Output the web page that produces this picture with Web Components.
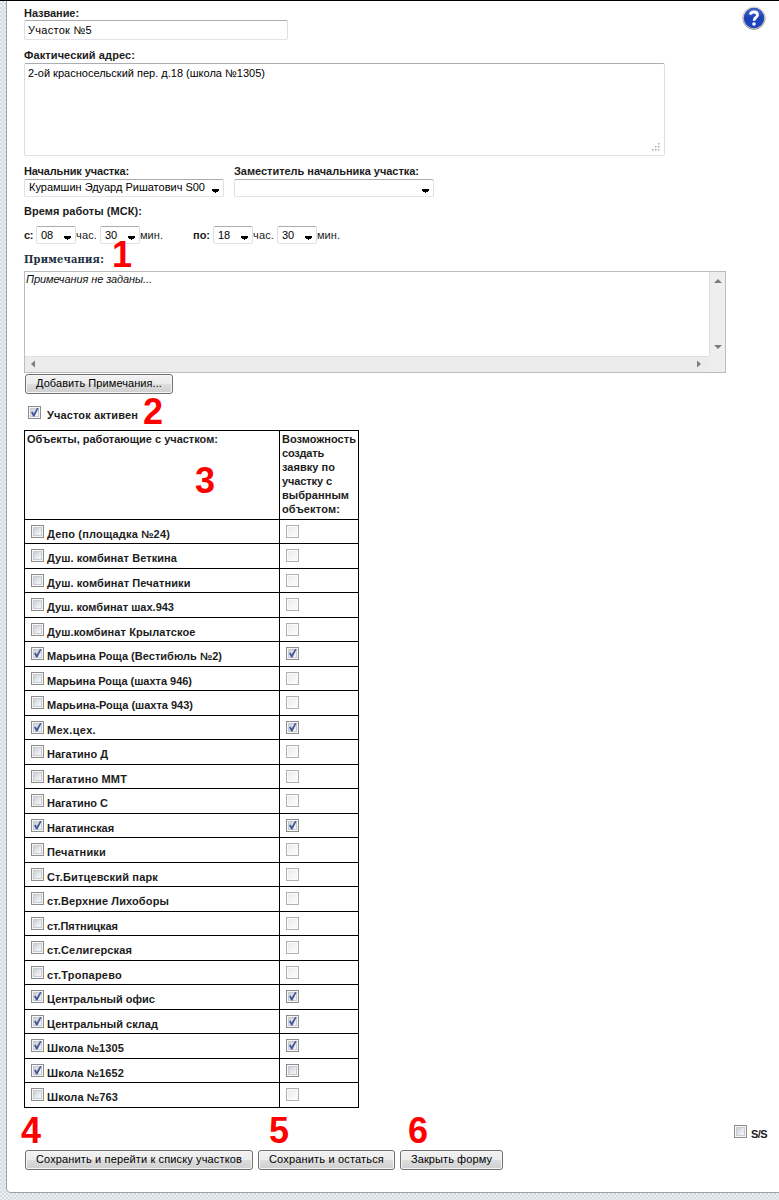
<!DOCTYPE html>
<html lang="ru">
<head>
<meta charset="utf-8">
<title>Участок №5</title>
<style>
html,body{margin:0;height:1200px;overflow:hidden;background:#fff}
body{font:11px/14px "Liberation Sans",Arial,sans-serif;color:#1c1c1c}
</style>
</head>
<body>
<site-page></site-page>
<script>
const define = (name, html, setup) => {
  const t = document.createElement('template');
  t.innerHTML = html;
  customElements.define(name, class extends HTMLElement {
    connectedCallback() {
      if (this.shadowRoot) return;
      this.attachShadow({mode: 'open'}).appendChild(t.content.cloneNode(true));
      if (setup) setup(this, this.shadowRoot);
    }
  });
};

/* Text run; "w" tracks it out or in to the given width. */
define('fit-text', `<style>
:host{display:block;white-space:nowrap;line-height:14px;height:14px}
:host([b]){font-weight:bold}
span{display:inline-block}
</style><span></span>`, (el, r) => {
  const s = r.querySelector('span');
  s.textContent = el.getAttribute('t');
  const w = parseFloat(el.getAttribute('w'));
  if (w) s.style.letterSpacing = ((w - s.getBoundingClientRect().width) / s.textContent.length).toFixed(3) + 'px';
});

define('check-box', `<style>
:host{display:block;flex:none;width:13px;height:13px}
svg{display:block}
.tick{display:none}
:host([on]) .tick{display:block}
.off{display:none}
:host([disabled]) .on{display:none}
:host([disabled]) .off{display:block}
</style><svg width="13" height="13" viewBox="0 0 13 13">
<defs>
<linearGradient id="g" x1="0" y1="0" x2="1" y2="1"><stop offset="0" stop-color="#c6cad2"/><stop offset=".55" stop-color="#e6e8eb"/><stop offset="1" stop-color="#f8f8f8"/></linearGradient>
<linearGradient id="h" x1="0" y1="0" x2="1" y2="1"><stop offset="0" stop-color="#ededee"/><stop offset="1" stop-color="#fbfbfb"/></linearGradient>
</defs>
<g class="on"><rect x=".5" y=".5" width="12" height="12" fill="#f6f6f6" stroke="#8c8d8d"/><rect x="2.5" y="2.5" width="8" height="8" fill="url(#g)" stroke="#c9ccd1"/></g>
<g class="off"><rect x=".5" y=".5" width="12" height="12" fill="#fbfbfb" stroke="#b1b1b1"/><rect x="2" y="2" width="9" height="9" fill="url(#h)"/></g>
<path class="tick" d="M3 6.2 4.7 5.5 5.7 7.4 9 2 10.6 2.3 6.4 10.4 5.1 10.4Z" fill="#43599c"/>
</svg>`);

define('text-field', `<style>
:host{display:flex;box-sizing:border-box;background:#fff;border:1px solid #e2e3ea;border-top-color:#abadb3;border-left-color:#dbdfe6;border-right-color:#dbdfe6;border-radius:2px;padding:2px 0 0 3px;color:#000}
.grip{display:none;margin:auto 4px 3px auto}
:host([area]) .grip{display:block}
</style><slot></slot><svg class="grip" width="9" height="9" fill="#aaa"><path d="M7 0h1.5v1.5H7zM7 3h1.5v1.5H7zM4 3h1.5v1.5H4zM7 6h1.5v1.5H7zM4 6h1.5v1.5H4zM1 6h1.5v1.5H1z"/></svg>`);

define('drop-list', `<style>
:host{display:flex;flex:none;box-sizing:border-box;height:18px;background:#fff;border:1px solid #e2e3ea;border-top-color:#abadb3;border-left-color:#dbdfe6;border-right-color:#dbdfe6;border-radius:2px;padding-left:4px;color:#000}
svg{margin:9px 4px 0 auto}
</style><slot></slot><svg width="7" height="4" shape-rendering="crispEdges"><path d="M0 0h7v1H0zM0 1h7v1H0zM1 2h5v1H1zM3 3h1v1H3z"/></svg>`);

define('push-button', `<style>
:host{display:flex;flex:none;box-sizing:border-box;height:20px;border:1px solid #707070;border-radius:3px;padding:1px 0 0 10px;color:#000;
background:linear-gradient(#f2f2f2 0,#ebebeb 50%,#dddddd 50%,#cfcfcf 100%);box-shadow:inset 0 0 0 1px #f6f6f6}
</style><slot></slot>`);

define('help-icon', `<style>:host{display:block;width:24px;height:24px}svg{display:block}</style>
<svg width="24" height="24" viewBox="0 0 24 24"><defs>
<linearGradient id="r" x1="0" y1="0" x2="0" y2="1"><stop offset="0" stop-color="#e0e0e0"/><stop offset="1" stop-color="#777"/></linearGradient>
<linearGradient id="b" x1="0" y1="0" x2="0" y2="1"><stop offset="0" stop-color="#4a6fd4"/><stop offset=".5" stop-color="#1c3fb6"/><stop offset="1" stop-color="#1d48c8"/></linearGradient></defs>
<circle cx="12" cy="12" r="11.3" fill="#e9e9e4" stroke="url(#r)" stroke-width=".9"/>
<circle cx="12" cy="12" r="9.9" fill="url(#b)" stroke="#18309a" stroke-width=".7"/>
<path d="M8.4 8.6C8.9 5.2 15.5 5 15.5 8.9 15.5 11.4 12.1 11.5 12 14.7" fill="none" stroke="#fff" stroke-width="2.8"/>
<circle cx="12" cy="18" r="1.8" fill="#fff"/></svg>`);

define('scroll-box', `<style>
:host{display:grid;box-sizing:border-box;width:702px;height:102px;border:1px solid #bcbcbc;grid-template:1fr 16px/1fr 16px;background:#fff;color:#111}
.c{padding-left:1px;font-style:italic}
.v{background:#eee;border-left:1px solid #e0e0e0;display:flex;flex-direction:column;justify-content:space-between;align-items:center;padding:7px 0 7px}
.h{background:#ececec;border-top:1px solid #e0e0e0;display:flex;justify-content:space-between;align-items:flex-start;padding:3px 7px 0 5px}
.k{background:#eee}
svg{display:block}
</style><div class="c"><slot></slot></div>
<div class="v"><svg width="8" height="4"><path d="M0 4 4 0 8 4Z" fill="#7c7c7c"/></svg><svg width="8" height="4"><path d="M0 0 4 4 8 0Z" fill="#7c7c7c"/></svg></div>
<div class="h"><svg width="5" height="8"><path d="M5 0.5 1 4 5 7.5Z" fill="#7c7c7c"/></svg><svg width="5" height="8"><path d="M0 0.5 4 4 0 7.5Z" fill="#7c7c7c"/></svg></div><div class="k"></div>`);

/* Numbered callout laid over the form. */
define('call-out', `<style>
:host{position:absolute;font:bold 36px/36px "Liberation Sans",Arial,sans-serif;color:#f00}
</style><slot></slot>`);

define('object-row', `<style>
:host{display:grid;grid-template-columns:254px 78px;column-gap:1px;background:#000;box-sizing:border-box;border-bottom:1px solid #000}
div{background:#fff;display:flex;padding:5px 0 0 6px}
fit-text{margin:2px 0 0 3px}
</style><div><check-box id="a"></check-box><fit-text b></fit-text></div><div><check-box id="c"></check-box></div>`, (el, r) => {
  const [name, w, a, c] = el.data;
  const t = r.querySelector('fit-text'), n = document.createElement('fit-text');
  n.setAttribute('b', ''); n.setAttribute('t', name); n.setAttribute('w', w);
  t.replaceWith(n);
  if (a) r.getElementById('a').setAttribute('on', '');
  if (c === 1) r.getElementById('c').setAttribute('on', '');
  if (c === 0) r.getElementById('c').setAttribute('disabled', '');
});

/* name, text width, linked, may create requests (0 disabled, 1 checked, 2 enabled) */
const OBJECTS = [
['Депо (площадка №24)',123,0,0],['Душ. комбинат Веткина',130,0,0],['Душ. комбинат Печатники',143.5,0,0],
['Душ. комбинат шах.943',127,0,0],['Душ.комбинат Крылатское',148.5,0,0],['Марьина Роща (Вестибюль №2)',175,1,1],
['Марьина Роща (шахта 946)',145,0,0],['Марьина-Роща (шахта 943)',146,0,0],['Мех.цех.',49,1,1],['Нагатино Д',61,0,0],
['Нагатино ММТ',80,0,0],['Нагатино С',61,0,0],['Нагатинская',67,1,1],['Печатники',59,0,0],['Ст.Битцевский парк',111,0,0],
['ст.Верхние Лихоборы',122,0,0],['ст.Пятницкая',71,0,0],['ст.Селигерская',85,0,0],['ст.Тропарево',75,0,0],
['Центральный офис',108,1,1],['Центральный склад',111,1,1],['Школа №1305',77,1,1],['Школа №1652',77,1,2],['Школа №763',71,0,0]];

define('object-table', `<style>
:host{display:block;box-sizing:border-box;width:335px;border:1px solid #000;border-bottom:0}
.head{display:grid;grid-template-columns:254px 78px;column-gap:1px;background:#000;height:88px;border-bottom:1px solid #000}
.head div{background:#fff;padding:1px 0 0 2px}
object-row{height:25px}
object-row:nth-child(odd){height:24px}
</style><div class="head"><div><fit-text b t="Объекты, работающие с участком:" w="191"></fit-text></div>
<div><fit-text b t="Возможность" w="74"></fit-text><fit-text b t="создать" w="42"></fit-text><fit-text b t="заявку по" w="53"></fit-text><fit-text b t="участку с" w="50"></fit-text><fit-text b t="выбранным" w="67"></fit-text><fit-text b t="объектом:" w="58"></fit-text></div></div>`, (el, r) => {
  for (const o of OBJECTS) { const e = document.createElement('object-row'); e.data = o; r.appendChild(e); }
});

define('site-page', `<style>
:host{display:block;position:relative;box-sizing:border-box;width:779px;height:1200px;border-top:1px solid #000;padding-left:6px;overflow:hidden;
background:#e4ebef conic-gradient(#d3dce2 25%,#eaf0f3 0 50%,#d3dce2 0 75%,#eaf0f3 0) 0 0/4px 4px}
main{display:block;box-sizing:border-box;width:790px;height:1192px;background:#fff;border:1px solid #a0a0a0;border-top:0;border-radius:0 0 0 5px;padding:5px 0 0 17px}
.top{display:flex;height:42px}
.top help-icon{margin-left:454px}
.row{display:flex}
.people{gap:10px;margin-top:8px;height:40px}
.people drop-list{width:200px;margin-top:1px}
.time{margin-top:8px;height:18px}
.time drop-list{width:40px}
.time fit-text{margin-top:2px}
.time drop-list fit-text{margin-top:1px}
.notes{margin-top:9px;font:bold 11px/14px "DejaVu Serif Condensed","DejaVu Serif",serif;color:#22303f}
.foot{margin-top:17px;width:743px;height:13px;justify-content:flex-end}
.acts{gap:5px;margin:12px 0 0 1px}
</style>
<main>
<div class="top"><div><fit-text b t="Название:" w="55"></fit-text><text-field style="width:264px;height:20px"><fit-text t="Участок №5" w="64"></fit-text></text-field></div><help-icon></help-icon></div>
<fit-text b t="Фактический адрес:" w="111"></fit-text>
<text-field area style="width:641px;height:93px;margin-top:1px"><fit-text t="2-ой красносельский пер. д.18 (школа №1305)" w="237"></fit-text></text-field>
<div class="row people">
<div><fit-text b t="Начальник участка:" w="105"></fit-text><drop-list><fit-text t="Курамшин Эдуард Ришатович S00" w="176"></fit-text></drop-list></div>
<div><fit-text b t="Заместитель начальника участка:" w="185"></fit-text><drop-list></drop-list></div>
</div>
<fit-text b t="Время работы (МСК):" w="118"></fit-text>
<div class="row time">
<fit-text b t="с:" w="9" style="width:12px"></fit-text><drop-list><fit-text t="08" w="12"></fit-text></drop-list><fit-text t="час." w="21" style="width:24px"></fit-text><drop-list><fit-text t="30" w="12"></fit-text></drop-list><fit-text t="мин." w="23" style="width:53px"></fit-text>
<fit-text b t="по:" w="17" style="width:20px"></fit-text><drop-list><fit-text t="18" w="12"></fit-text></drop-list><fit-text t="час." w="21" style="width:24px"></fit-text><drop-list><fit-text t="30" w="12"></fit-text></drop-list><fit-text t="мин." w="23"></fit-text>
</div>
<fit-text class="notes" t="Примечания:" w="80"></fit-text>
<scroll-box style="margin-top:4px"><fit-text t="Примечания не заданы..." w="126"></fit-text></scroll-box>
<push-button style="width:148px;margin:1px 0 0 1px"><fit-text t="Добавить Примечания..." w="126"></fit-text></push-button>
<div class="row" style="margin:12px 0 0 4px;height:24px"><check-box on></check-box><fit-text b t="Участок активен" w="91" style="margin:2px 0 0 6px"></fit-text></div>
<object-table></object-table>
<div class="row foot"><check-box></check-box><fit-text b t="S/S" w="16" style="margin:2px 0 0 4px"></fit-text></div>
<div class="row acts"><push-button style="width:228px"><fit-text t="Сохранить и перейти к списку участков" w="206"></fit-text></push-button><push-button style="width:137px"><fit-text t="Сохранить и остаться" w="115"></fit-text></push-button><push-button style="width:103px"><fit-text t="Закрыть форму" w="81"></fit-text></push-button></div>
</main>
<call-out style="left:112px;top:236px">1</call-out>
<call-out style="left:143px;top:393px">2</call-out>
<call-out style="left:195px;top:462px">3</call-out>
<call-out style="left:21px;top:1112px">4</call-out>
<call-out style="left:269px;top:1112px">5</call-out>
<call-out style="left:408px;top:1112px">6</call-out>`);
</script>
</body>
</html>
